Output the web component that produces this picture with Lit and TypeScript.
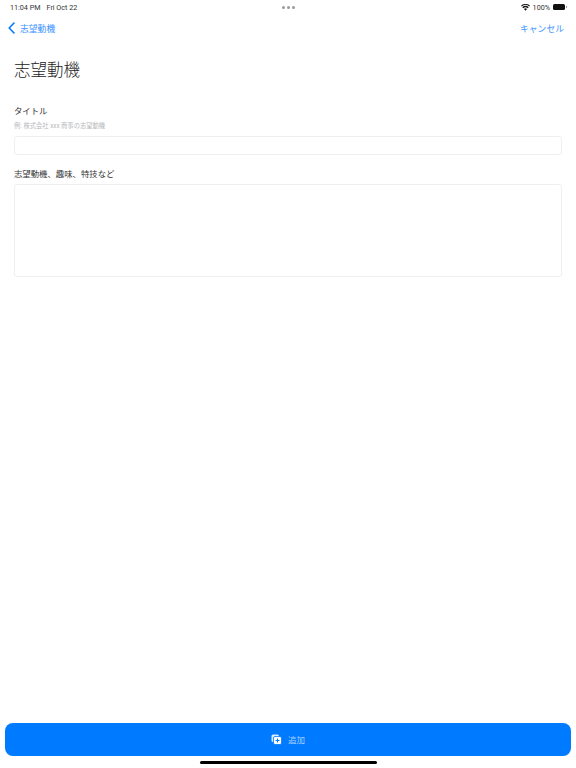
import { LitElement, html, css } from 'lit';
import { customElement } from 'lit/decorators.js';

@customElement('app-root')
export class AppRoot extends LitElement {
  static styles = css`
    :host {
      display: block;
      width: 576px;
      height: 768px;
      background: #fff;
      overflow: hidden;
      font-family: "Roboto", "Noto Sans CJK JP", sans-serif;
      color: #111;
    }
    .page {
      display: flex;
      flex-direction: column;
      height: 768px;
      position: relative;
    }
    .status {
      display: grid;
      grid-template-columns: 1fr auto 1fr;
      align-items: center;
      height: 14px;
      padding: 0 9px 0 10px;
      font-size: 7.2px;
      color: #333;
    }
    .status .left { display: flex; gap: 6px; }
    .status .right {
      display: flex;
      justify-content: flex-end;
      align-items: center;
      gap: 3px;
    }
    .dots { display: flex; gap: 2px; }
    .dots i {
      width: 3px;
      height: 3px;
      border-radius: 50%;
      background: #9a9a9e;
    }
    .battery {
      display: flex;
      align-items: center;
      gap: 1px;
    }
    .battery b {
      display: block;
      width: 12px;
      height: 6px;
      border-radius: 1.5px;
      background: #111;
    }
    .battery u {
      display: block;
      width: 1px;
      height: 2px;
      background: #999;
    }
    .nav {
      display: flex;
      justify-content: space-between;
      align-items: center;
      height: 28px;
      padding: 0 12px 0 8px;
      font-size: 8.8px;
      color: #3a92ff;
    }
    .back { display: flex; align-items: center; gap: 5px; }
    .title {
      margin: 17px 0 0 14px;
      font-size: 16.5px;
      line-height: 24px;
      font-weight: 300;
      color: #222;
    }
    .form {
      display: flex;
      flex-direction: column;
      padding: 0 14px;
      margin-top: 21px;
    }
    .label {
      font-size: 8.4px;
      line-height: 14px;
      color: #333;
    }
    .hint {
      font-size: 6.3px;
      line-height: 10px;
      color: #b8b8bc;
      margin-top: 3px;
    }
    .input {
      height: 17px;
      margin-top: 5px;
      border: 1px solid #efeff1;
      border-radius: 3px;
    }
    .area {
      height: 91px;
      margin-top: 3px;
      border: 1px solid #efeff1;
      border-radius: 3px;
    }
    .second { margin-top: 12px; }
    .add {
      margin: auto 5px 12px;
      height: 33px;
      border-radius: 8px;
      background: #007aff;
      color: #a9d0ff;
      font-size: 8.5px;
      display: flex;
      align-items: center;
      justify-content: center;
      gap: 6px;
      padding-bottom: 1px;
      box-sizing: border-box;
    }
    .home {
      position: absolute;
      left: 200px;
      bottom: 4px;
      width: 177px;
      height: 3px;
      border-radius: 2px;
      background: #000;
    }
  `;

  render() {
    return html`
      <div class="page">
        <div class="status">
          <div class="left"><span>11:04 PM</span><span>Fri Oct 22</span></div>
          <div class="dots"><i></i><i></i><i></i></div>
          <div class="right">
            <svg width="9" height="7" viewBox="0 0 18 14">
              <path fill="#111" d="M9 13.5 6 10a4.500 4.500 0 0 1 6 0zM4.500 8.400 2.600 6.300a9.600 9.600 0 0 1 12.800 0l-1.900 2.100a6.800 6.800 0 0 0-9 0zM1.500 5 0 3.300a13.400 13.400 0 0 1 18 0L16.500 5A11.200 11.200 0 0 0 1.500 5z"/>
            </svg>
            <span>100%</span>
            <span class="battery"><b></b><u></u></span>
          </div>
        </div>
        <div class="nav">
          <div class="back">
            <svg width="7" height="12" viewBox="0 0 7 12">
              <path d="M6 1 1.200 6 6 11" fill="none" stroke="#007aff" stroke-width="1.600" stroke-linecap="round" stroke-linejoin="round"/>
            </svg>
            <span>志望動機</span>
          </div>
          <span>キャンセル</span>
        </div>
        <h1 class="title">志望動機</h1>
        <div class="form">
          <div class="label">タイトル</div>
          <div class="hint">例: 株式会社 xxx 商事の志望動機</div>
          <div class="input"></div>
          <div class="label second">志望動機、趣味、特技など</div>
          <div class="area"></div>
        </div>
        <div class="add">
          <svg width="11" height="11" viewBox="0 0 11 11">
            <rect x="0.500" y="0.500" width="7.500" height="7.500" rx="1.500" fill="#fff" opacity="0.850"/>
            <rect x="2.500" y="2.500" width="8" height="8" rx="1.500" fill="#fff" stroke="#007aff" stroke-width="0.800"/>
            <path d="M6.500 4.500v4M4.500 6.500h4" stroke="#007aff" stroke-width="1"/>
          </svg>
          <span>追加</span>
        </div>
        <div class="home"></div>
      </div>
    `;
  }
}
